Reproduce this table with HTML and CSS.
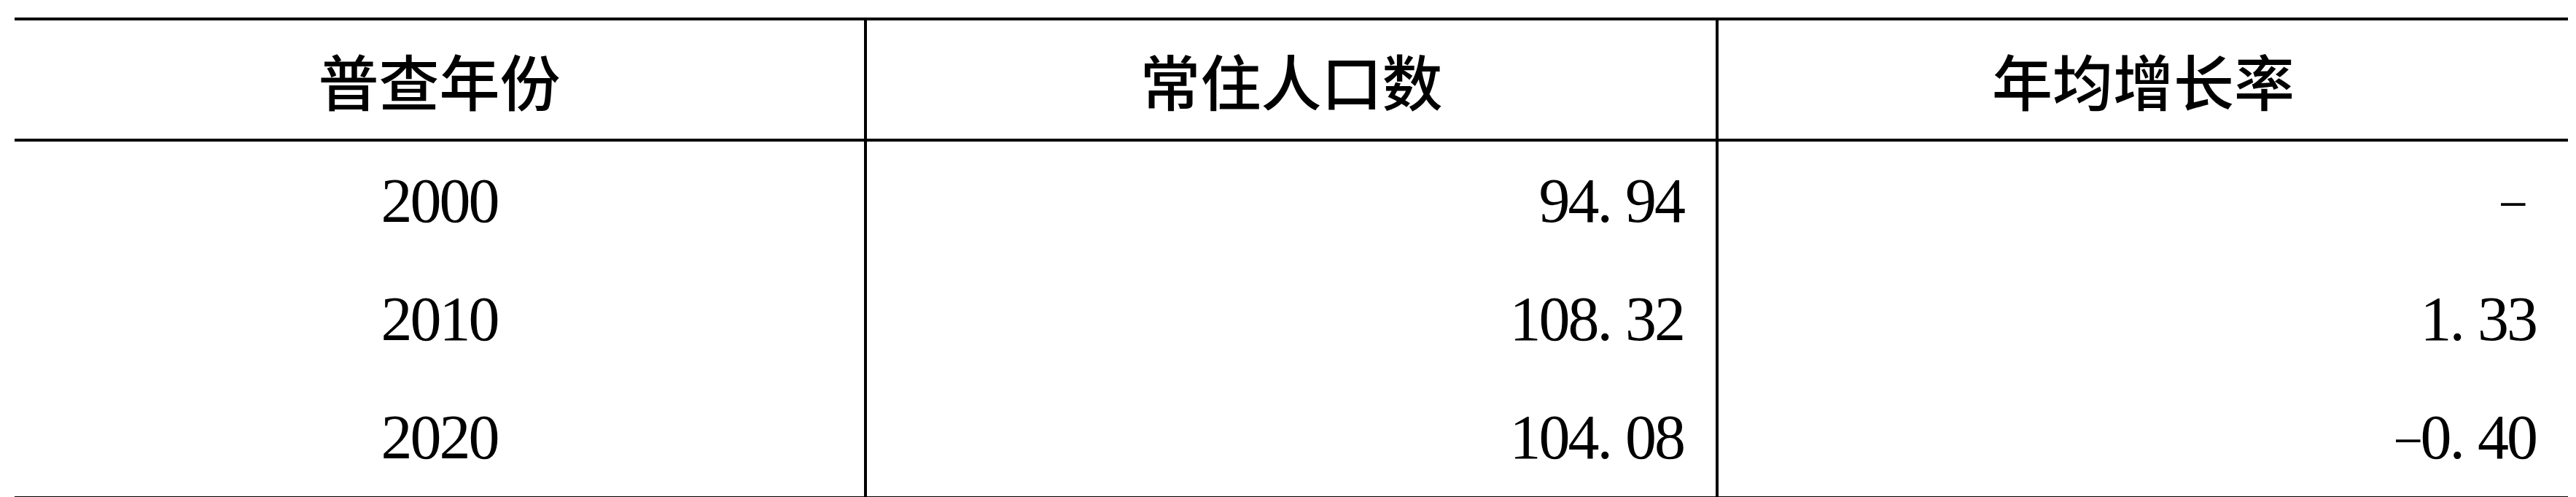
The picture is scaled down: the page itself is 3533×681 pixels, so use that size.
FILE: index.html
```html
<!DOCTYPE html>
<html lang="zh-CN">
<head>
<meta charset="utf-8">
<title>普查年份 常住人口数</title>
<link rel="stylesheet" href="styles.css">
</head>
<body>
<div class="table" role="table">
  <div class="cell head" role="columnheader">普查年份</div>
  <div class="cell head sep" role="columnheader">常住人口数</div>
  <div class="cell head sep" role="columnheader">年均增长率</div>

  <div class="cell num center" role="cell">2000</div>
  <div class="cell num right sep" role="cell">94<span class="dot">.</span>94</div>
  <div class="cell num right sep" role="cell"><span class="minus solo">-</span></div>

  <div class="cell num center" role="cell">2010</div>
  <div class="cell num right sep" role="cell">108<span class="dot">.</span>32</div>
  <div class="cell num right sep" role="cell">1<span class="dot">.</span>33</div>

  <div class="cell num center" role="cell">2020</div>
  <div class="cell num right sep" role="cell">104<span class="dot">.</span>08</div>
  <div class="cell num right sep" role="cell"><span class="minus">-</span>0<span class="dot">.</span>40</div>
</div>
</body>
</html>
```
FILE: styles.css
```css
html, body {
  margin: 0;
  padding: 0;
  background: #ffffff;
}

.table {
  margin: 24px 0 0 20px;
  width: 3502px;
  display: grid;
  grid-template-columns: 1165px 1168px 1169px;
  grid-template-rows: 166px 162px 162px 162px;
  border-top: 4px solid #000;
  border-bottom: 4px solid #000;
  color: #000;
}

.cell {
  box-sizing: border-box;
  display: flex;
  align-items: center;
  line-height: 1;
  white-space: nowrap;
}

.sep {
  border-left: 4px solid #000;
}

.head {
  justify-content: center;
  border-bottom: 4px solid #000;
  font-family: "Noto Sans CJK SC", "Noto Sans CJK JP", sans-serif;
  font-weight: 500;
  font-size: 83px;
}

.num {
  font-family: "Liberation Serif", "Times New Roman", serif;
  font-size: 86px;
  letter-spacing: -3px;
}

.center {
  justify-content: center;
}

.right {
  justify-content: flex-end;
  padding-right: 44px;
}

.dot {
  padding-right: 20px;
}

.minus {
  display: inline-block;
  transform: scaleX(1.5) scaleY(0.6);
  transform-origin: right center;
}

.solo {
  margin-right: 14px;
}
```
